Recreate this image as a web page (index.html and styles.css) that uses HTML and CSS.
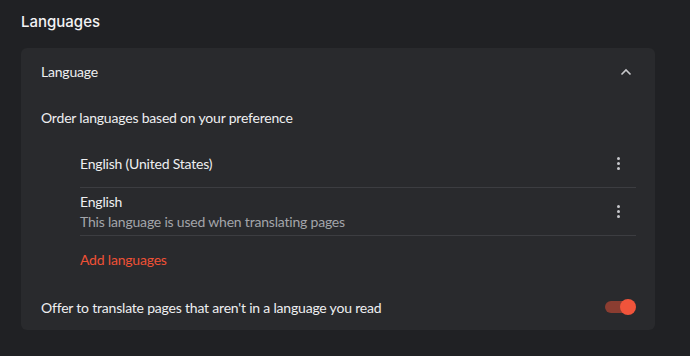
FILE: index.html
```html
<!DOCTYPE html>
<html lang="en">
<head>
    <meta charset="UTF-8">
    <title>Languages</title>
    <link rel="stylesheet" href="styles.css">
</head>
<body>
    <h2 class="page-title">Languages</h2>
    <div class="card">
        <div class="row header-row">
            <span>Language</span>
            <svg class="chevron" width="12" height="8" viewBox="0 0 12 8"><path d="M1.5 6.5 L6 2 L10.5 6.5" fill="none" stroke="#c8c9cc" stroke-width="1.6"/></svg>
        </div>
        <div class="row order-row">Order languages based on your preference</div>
        <div class="lang-list">
            <div class="lang-item single">
                <div class="lang-name">English (United States)</div>
                <span class="kebab"><i></i><i></i><i></i></span>
            </div>
            <div class="lang-item">
                <div>
                    <div class="lang-name">English</div>
                    <div class="lang-note">This language is used when translating pages</div>
                </div>
                <span class="kebab"><i></i><i></i><i></i></span>
            </div>
            <div class="add-link">Add languages</div>
        </div>
        <div class="row toggle-row">
            <span>Offer to translate pages that aren't in a language you read</span>
            <span class="toggle"><span class="knob"></span></span>
        </div>
    </div>
</body>
</html>
```

FILE: styles.css
```css
body { margin: 0; padding: 0 35px 0 21px; background: #202124; color: #eeeff1; font-family: Lato, "Noto Sans", sans-serif; font-size: 14px; letter-spacing: -0.2px; }
.page-title { margin: 0; height: 48px; line-height: 44px; font-family: Inter, "Noto Sans", sans-serif; font-size: 15px; font-weight: 500; letter-spacing: 0; color: #f3f3f5; }
.card { background: #292a2d; border-radius: 6px; padding: 0 19px 0 20px; }
.row { display: flex; align-items: center; justify-content: space-between; }
.header-row { height: 47px; }
.chevron { margin-right: 4px; }
.order-row { height: 45px; }
.lang-list { padding-left: 39px; }
.lang-item { display: flex; align-items: center; justify-content: space-between; height: 47px; border-bottom: 1px solid #3c3d41; }
.lang-item .lang-name { line-height: 20px; }
.lang-note { color: #a3a5aa; line-height: 20px; }
.kebab { display: flex; flex-direction: column; gap: 2px; margin-right: 16px; }
.kebab i { width: 3px; height: 3px; border-radius: 50%; background: #c6c7cb; }
.add-link { height: 48px; line-height: 48px; color: #ef5136; }
.toggle-row { height: 46px; }
.toggle { position: relative; width: 26px; height: 12px; border-radius: 6px; background: #8b3d31; margin-right: 5px; }
.toggle .knob { position: absolute; top: -2px; right: -5px; width: 16px; height: 16px; border-radius: 50%; background: #f0543b; }
```
